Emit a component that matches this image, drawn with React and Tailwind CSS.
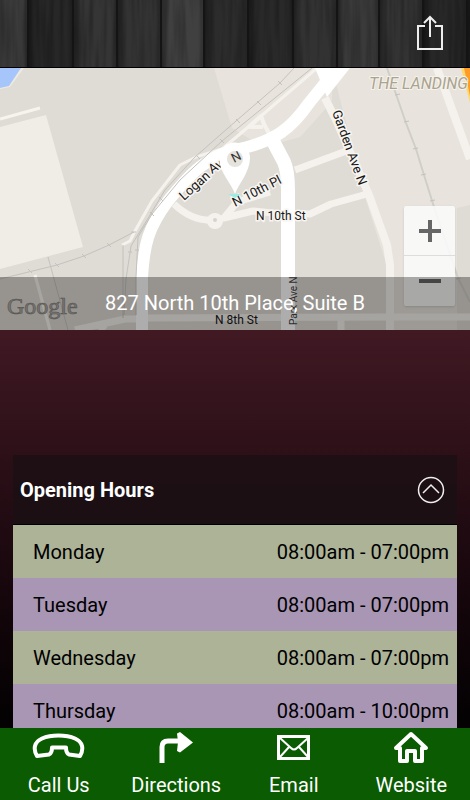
import React from "react";

const hours = [
  ["Monday", "08:00am - 07:00pm"],
  ["Tuesday", "08:00am - 07:00pm"],
  ["Wednesday", "08:00am - 07:00pm"],
  ["Thursday", "08:00am - 10:00pm"],
];

const planks = [
  [-16, 44, "#3c3c3c"],
  [28, 45, "#272727"],
  [73, 44, "#353535"],
  [117, 44, "#333333"],
  [161, 43, "#404040"],
  [204, 44, "#2c2c2c"],
  [248, 45, "#292929"],
  [293, 44, "#323232"],
  [337, 42, "#3a3a3a"],
  [379, 44, "#333333"],
  [423, 44, "#272727"],
  [467, 44, "#222222"],
];

function WoodTexture() {
  return (
    <svg aria-hidden="true" viewBox="0 0 470 67" preserveAspectRatio="none" className="absolute inset-0 h-full w-full">
      <defs>
        <linearGradient id="plank">
          <stop offset="0" stopColor="#000" stopOpacity=".4" />
          <stop offset=".2" stopColor="#000" stopOpacity="0" />
          <stop offset=".85" stopColor="#000" stopOpacity="0" />
          <stop offset="1" stopColor="#000" stopOpacity=".25" />
        </linearGradient>
        <filter id="grain" x="0" y="0" width="100%" height="100%">
          <feTurbulence type="fractalNoise" baseFrequency="0.2 0.012" numOctaves="2" seed="5" />
          <feColorMatrix values="0 0 0 0 0  0 0 0 0 0  0 0 0 0 0  .5 0 0 0 -.18" />
        </filter>
      </defs>
      {planks.map(([x, w, fill]) => (
        <g key={x}>
          <rect x={x} width={w} height="67" fill={fill} />
          <rect x={x} width={w} height="67" fill="url(#plank)" />
        </g>
      ))}
      <rect width="470" height="67" filter="url(#grain)" />
      {planks.map(([x]) => (
        <path key={x} d={`M${x} 0v67`} stroke="#141414" strokeWidth="2" />
      ))}
    </svg>
  );
}

function MapDrawing() {
  return (
    <svg
      role="img"
      aria-label="Map of the streets around 827 North 10th Place"
      viewBox="0 68 470 262"
      preserveAspectRatio="xMidYMid slice"
      className="absolute inset-0 h-full w-full font-['Roboto',sans-serif]"
    >
      <rect y="68" width="470" height="262" fill="#dfdbd5" />
      <path d="M214 68H470V330H392V282L365 197L332 68V100L304 137L276 155L232 128Z" fill="#e8e4dd" />
      <path d="M300 137L330 104L360 195L372 238L388 277V330H145V255L175 190L235 155Z" fill="#dfdbd5" />
      <path d="M457 208L470 205V330H457Z" fill="#dfdbd5" />
      <path d="M0 127L46 115L83 247L0 269Z" fill="#f0ede6" />
      <path d="M0 68H24L10 87L0 89Z" fill="#eeeae0" />
      <path d="M0 68H21L9 86L0 88Z" fill="#a6c6fb" />
      <path d="M0 119L40 108M35 275L50 330" fill="none" stroke="#f7f4ee" strokeWidth="3" />

      <g fill="none" stroke="#f5f2ed" strokeLinejoin="round">
        <path d="M317 68L240 134L222 149L196 157L180 165L152 201L135 231L130 241L122 245" strokeWidth="3" />
        <path d="M249 127L261 116L264 124L278 150M249 127H263" strokeWidth="4" />
        <path d="M325 98L336 120L369 195L387 245L390 265V330" strokeWidth="8" />
        <path d="M437 68L470 159" strokeWidth="8" />
        <path d="M295 170L349 150M174 204Q197 226 224 218L253 211L282 214L310 214L331 204L367 194M224 218L237 202L270 192" strokeWidth="7" />
        <path d="M145 318L390 317H470M75 330L125 319H145M100 326L105 330M341 318V330" strokeWidth="7" />
      </g>
      <circle cx="215" cy="221" r="8" fill="#f5f2ed" />
      <circle cx="215" cy="220" r="2" fill="#d7d2ca" />
      <path d="M315 68H350L327 97Z" fill="#fff" />
      <g fill="none" stroke="#fff">
        <path d="M343 61L309 103C291 129 275 140 244 148C205 154 187 178 168 201C148 228 144 244 142 278V330" strokeWidth="12" />
        <path d="M274 143L284 162Q288 171 288 190V330" strokeWidth="14" />
      </g>

      <g fill="none" stroke="#c4c2be" strokeWidth="1">
        <path d="M294 68L280 83L236 121L195 157L165 190L147 220L131 246L126 279L124 315" />
        <path d="M312 68L286 89L222 141L180 180L152 214L138 237L136 277V315" />
        <path d="M0 279L57 265L84 256L109 245L134 232M48 257L68 330M123 245V318" />
        <path d="M387 68L397 97L406 123L416 149L424 175L434 207L458 278L470 302" stroke="#d0cec9" strokeWidth="2" />
        <path d="M278 81l4 4M257 101l4 4M236 119l4 4M220 139l4 4M196 155l4 4M159 197l4 4M150 212l4 4M131 232l5 0M107 243l4 4M82 254l4 4M55 263l4 4M28 269l4 4M128 252h4M135 250h4M395 95l5-1M404 122l5-1M413 149l5-1M421 175l5-1M430 201l5-1M456 279l5-1" />
      </g>
      <path d="M461 68H470V103Z" fill="#ffd76f" />
      <path d="M464 68H470V96Z" fill="#ff9c28" />

      <g fill="#171717" stroke="#f7f5f1" strokeWidth="3" paintOrder="stroke" fontSize="12">
        <text transform="translate(184 201) rotate(-42)" fontSize="13">Logan</text>
        <text transform="translate(212 174) rotate(-34)" fontSize="13">Ave</text>
        <text transform="translate(235 207) rotate(-27)" fontSize="13">N 10th Pl</text>
        <text x="256" y="220">N 10th St</text>
        <text transform="translate(332 112) rotate(70)" fontSize="13">Garden Ave N</text>
        <text x="215" y="324" stroke="none">N 8th St</text>
        <text transform="translate(297 325) rotate(-90)" stroke="none" fill="#444" fontSize="10">Park Ave N</text>
      </g>
      <text x="369" y="89" fill="#aaa38e" stroke="#f5f2ec" strokeWidth="2" paintOrder="stroke" fontSize="16" fontStyle="italic">
        THE LANDING
      </text>
      <path d="M235 194C232 184 219 172 219 158A15 15 0 1 1 250 158C250 172 238 185 235 194Z" fill="#fff" />
      <circle cx="235" cy="159" r="8" fill="#e6e2dc" />
      <text transform="translate(234 163) rotate(-27)" fill="#333" fontSize="13">N</text>
      <path d="M228 194H241L235 198Z" fill="#98eee5" />
      <text x="7" y="314" fill="#b0ada8" stroke="#86837e" strokeWidth=".7" className="font-['Liberation_Serif',serif]" fontSize="24">
        Google
      </text>
    </svg>
  );
}

function Icon({ name }) {
  const common = { fill: "none", stroke: "#fff", strokeLinejoin: "round" };
  if (name === "phone")
    return (
      <svg aria-hidden="true" width="54" height="36" viewBox="0 0 54 36" {...common} strokeWidth="4">
        <path d="M5 28C1 21 2 14 10 10.500C19 6.500 34 6.500 43 10.500C51 14 52 21 48 28L37 26.500Q34 25 34 19.500H20Q20 25 17 26.500Z" />
      </svg>
    );
  if (name === "turn")
    return (
      <svg aria-hidden="true" width="54" height="36" viewBox="0 0 54 36" fill="none">
        <path d="M13 35V19Q13 13 19 13H33" stroke="#fff" strokeWidth="5" />
        <path d="M28 5.500L31 4L44 14.500L31 24.500L28 23L29 14Z" fill="#fff" />
      </svg>
    );
  if (name === "mail")
    return (
      <svg aria-hidden="true" width="54" height="36" viewBox="0 0 54 36" fill="none" stroke="#fff">
        <path d="M11.500 8.500H41.500V30.500H11.500Z" strokeWidth="3" />
        <path d="M13 10L24 20Q27 23 30 20L41 10M13 29L22 19M41 29L32 19" strokeWidth="2" />
      </svg>
    );
  return (
    <svg aria-hidden="true" width="54" height="36" viewBox="0 0 54 36" {...common} strokeWidth="4">
      <path d="M12 20L27 6L42 20H38V33H31V23H23V33H16V20Z" />
    </svg>
  );
}

const actions = [
  ["phone", "Call Us"],
  ["turn", "Directions"],
  ["mail", "Email"],
  ["home", "Website"],
];

export default function App() {
  return (
    <div className="flex h-screen flex-col overflow-hidden bg-black font-['Roboto',sans-serif] text-xl text-white">
      <header className="relative flex h-[68px] shrink-0 items-center justify-end border-b border-black bg-[#2d2d2d] px-6">
        <WoodTexture />
        <button type="button" aria-label="Share" className="relative">
          <svg aria-hidden="true" width="32" height="40" viewBox="0 0 32 40" fill="none" stroke="#eee" strokeWidth="2">
            <path d="M11 12H4V35H28V12H21M16 23V3M10 9L16 3L22 9" />
          </svg>
        </button>
      </header>

      <main className="flex min-h-0 flex-1 flex-col overflow-hidden bg-linear-to-b from-[#401923] from-40% via-[#2b0f17] via-60% to-[#050204] to-98%">
        <section aria-label="Location" className="relative h-[262px] shrink-0 overflow-hidden">
          <MapDrawing />
          <div className="absolute top-[138px] right-[15px] flex w-[51px] flex-col divide-y divide-[#ddd] rounded-xs bg-[#fafafa]/90 shadow">
            <button type="button" aria-label="Zoom in" className="flex h-[50px] items-center justify-center">
              <svg aria-hidden="true" width="22" height="22" viewBox="0 0 22 22" stroke="#666" strokeWidth="4">
                <path d="M0 11H22M11 0V22" />
              </svg>
            </button>
            <button type="button" aria-label="Zoom out" className="flex h-[50px] items-center justify-center">
              <svg aria-hidden="true" width="22" height="22" viewBox="0 0 22 22" stroke="#666" strokeWidth="4">
                <path d="M0 11H22" />
              </svg>
            </button>
          </div>
          <p className="absolute inset-x-0 bottom-0 h-[53px] bg-black/32 text-center leading-[53px]">
            827 North 10th Place, Suite B
          </p>
        </section>

        <section className="mx-[13px] mt-[125px]">
          <h2 className="border-b border-black bg-[#1c1014]/90 font-bold">
            <button type="button" aria-expanded="true" className="flex h-[69px] w-full items-center justify-between pr-3 pl-[7px]">
              Opening Hours
              <svg aria-hidden="true" width="28" height="28" viewBox="0 0 28 28" fill="none" stroke="#eee" strokeWidth="1.5">
                <circle cx="14" cy="14" r="12.5" />
                <path d="M6 17L14 9L22 17" />
              </svg>
            </button>
          </h2>
          <table className="w-full border-collapse text-black">
            <tbody>
              {hours.map(([day, time]) => (
                <tr key={day} className="h-[53px] odd:bg-[#adb397] even:bg-[#a996b4]">
                  <th scope="row" className="pl-5 text-left font-normal">{day}</th>
                  <td className="pr-2 text-right">{time}</td>
                </tr>
              ))}
            </tbody>
          </table>
        </section>
      </main>

      <nav aria-label="Contact" className="grid h-[72px] shrink-0 grid-cols-4 bg-[#0b5b02]">
        {actions.map(([icon, label]) => (
          <a key={label} href={"#" + icon} className="flex flex-col items-center">
            <Icon name={icon} />
            <span className="mt-[7px] leading-7">{label}</span>
          </a>
        ))}
      </nav>
    </div>
  );
}
